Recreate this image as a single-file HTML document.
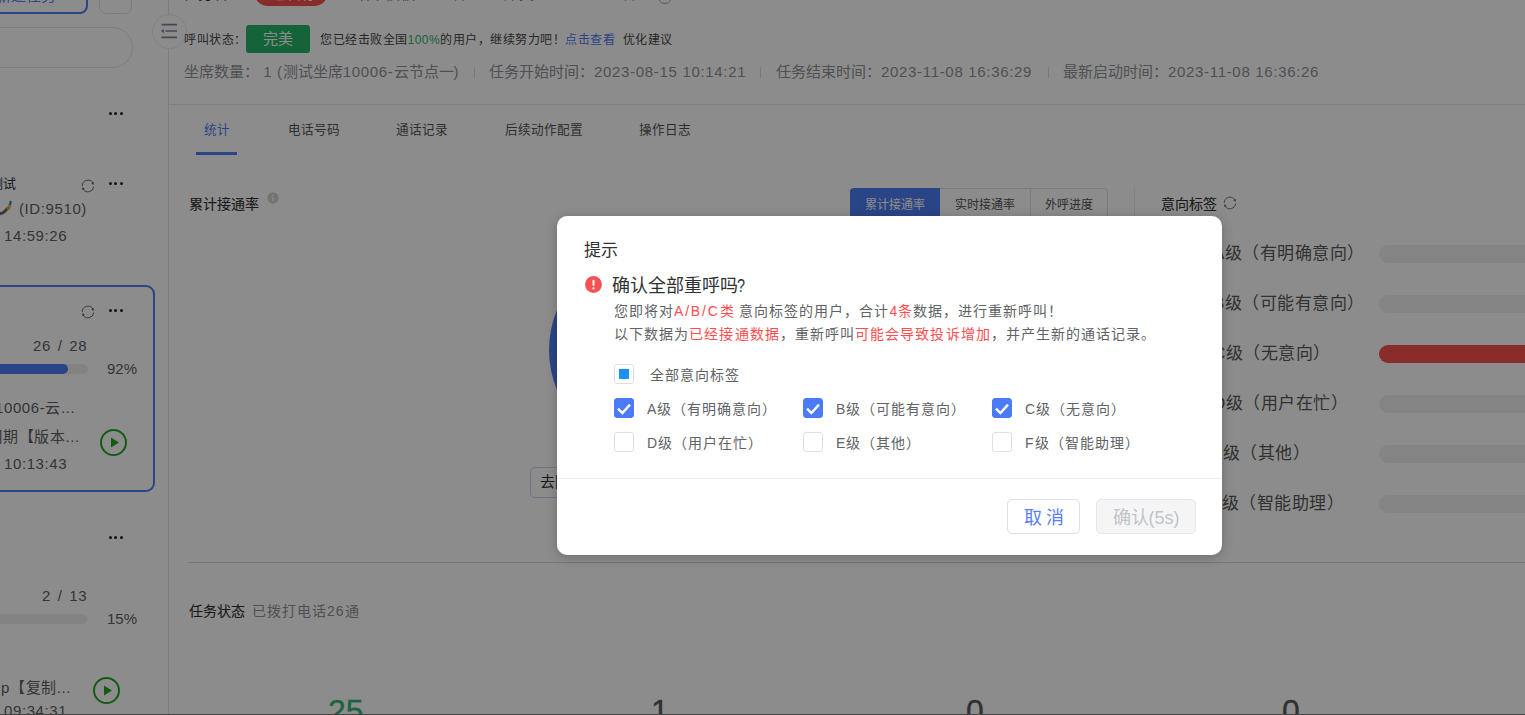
<!DOCTYPE html>
<html lang="zh-CN"><head><meta charset="utf-8">
<style>
*{margin:0;padding:0;box-sizing:border-box}
html,body{width:1525px;height:715px;overflow:hidden;background:#fff;font-family:"Liberation Sans",sans-serif;color:#303133}
.a{position:absolute;white-space:nowrap}
.t{position:absolute;white-space:nowrap;line-height:20px;height:20px}
.s{font-size:15px;color:#606266;letter-spacing:0.6px}
.dots{position:absolute;width:14px;height:3px}
.dots i{position:absolute;top:0;width:3px;height:3px;border-radius:50%;background:#222}
.dots i:nth-child(1){left:0}.dots i:nth-child(2){left:5.3px}.dots i:nth-child(3){left:10.6px}
.n{letter-spacing:0.68px}
.big{top:692.5px;font-size:32px;line-height:36px;font-weight:normal;-webkit-text-stroke:0.35px currentColor;color:#5a5a5a}
.med{-webkit-text-stroke:0.1px currentColor}
.mask{position:absolute;left:0;top:0;width:1525px;height:715px;background:rgba(0,0,0,0.45)}
.modal{position:absolute;left:557px;top:216px;width:665px;height:339px;background:#fff;border-radius:10px;box-shadow:0 2px 12px rgba(0,0,0,0.22)}
.cb{position:absolute;width:20px;height:20px;border:1.5px solid #dcdfe6;border-radius:3px;background:#fff}
.cb.on{background:#4c7bf7;border-color:#4c7bf7}
.cb.on svg{position:absolute;left:-1.5px;top:-1.5px}
.lbl{position:absolute;white-space:nowrap;font-size:14px;line-height:20px;color:#606266;letter-spacing:1px}
.red{color:#ff4d4f}
.bar{position:absolute;left:1379px;width:200px;height:18px;border-radius:9px;background:#f0f0f0}
.il{position:absolute;white-space:nowrap;font-size:17px;line-height:20px;color:#5a5a5a;letter-spacing:0.5px}
</style></head><body>
<div id="page">
  <!-- sidebar -->
  <div class="a" style="left:-22px;top:-24px;width:110px;height:38px;border:2px solid #4e7ef5;border-radius:8px"></div>
  <div class="t" style="left:-4px;top:-14px;font-size:15px;color:#4e7ef5">新建任务</div>
  <div class="a" style="left:99px;top:-22px;width:33px;height:36px;border:1px solid #dfe3ef;border-radius:7px"></div>
  <div class="a" style="left:-40px;top:27px;width:173px;height:41px;border:1px solid #dfe3ef;border-radius:21px"></div>
  <div class="dots" style="left:109px;top:112px"><i></i><i></i><i></i></div>

  <div class="t" style="left:-10px;top:174px;font-size:13px;color:#303133">测试</div>
  <svg class="a" style="left:81px;top:179px" width="14" height="14" viewBox="0 0 14 14"><path d="M12.78 7.5A5.8 5.8 0 0 1 1.98 9.9M1.2 7A5.8 5.8 0 0 1 12.12 4.28" fill="none" stroke="#6a6a6a" stroke-width="1"/><path d="M13 3l-0.3 2.8-2.6-1zM1 11l0.3-2.8 2.6 1z" fill="#6a6a6a"/></svg>
  <div class="dots" style="left:109px;top:182px"><i></i><i></i><i></i></div>
  <svg class="a" style="left:-2px;top:198px" width="18" height="20" viewBox="0 0 18 20"><path d="M0 16 Q6 16 9.5 10" fill="none" stroke="#6a6a6a" stroke-width="3"/><path d="M8.5 11l1.5-4 3 1.2-1.5 4z" fill="#e6b030"/><path d="M10.5 7l1.5-4.5 1.8 0.8-0.8 4.5z" fill="#3d88c0"/></svg>
  <div class="t s" style="left:19px;top:199px">(ID:9510)</div>
  <div class="t s" style="left:4px;top:226px">14:59:26</div>

  <div class="a" style="left:-24px;top:285px;width:179px;height:207px;border:2px solid #4e7ef5;border-radius:9px"></div>
  <svg class="a" style="left:81px;top:305px" width="14" height="14" viewBox="0 0 14 14"><path d="M12.78 7.5A5.8 5.8 0 0 1 1.98 9.9M1.2 7A5.8 5.8 0 0 1 12.12 4.28" fill="none" stroke="#6a6a6a" stroke-width="1"/><path d="M13 3l-0.3 2.8-2.6-1zM1 11l0.3-2.8 2.6 1z" fill="#6a6a6a"/></svg>
  <div class="dots" style="left:109px;top:308.5px"><i></i><i></i><i></i></div>
  <div class="t s" style="left:33px;top:336px;word-spacing:2px">26 / 28</div>
  <div class="a" style="left:-30px;top:364px;width:118px;height:10px;border-radius:5px;background:#eeeeee"></div>
  <div class="a" style="left:-30px;top:364px;width:98px;height:10px;border-radius:5px;background:#4e7ef5"></div>
  <div class="t s" style="left:107px;top:359px;letter-spacing:0">92%</div>
  <div class="t s" style="left:-5px;top:398px">10006-云...</div>
  <div class="t s" style="left:-12.5px;top:427px">周期【版本...</div>
  <div class="a" style="left:100px;top:428.5px;width:27.4px;height:27.4px;border:2.5px solid #22a822;border-radius:50%"></div>
  <svg class="a" style="left:100px;top:428.5px" width="27" height="27" viewBox="0 0 27 27"><path d="M11 8.5v10l8-5z" fill="#22a822"/></svg>
  <div class="t s" style="left:4px;top:454px">10:13:43</div>

  <div class="dots" style="left:109px;top:535.5px"><i></i><i></i><i></i></div>
  <div class="t s" style="left:42px;top:586px;word-spacing:2px">2 / 13</div>
  <div class="a" style="left:-30px;top:614px;width:117px;height:10px;border-radius:5px;background:#eeeeee"></div>
  <div class="t s" style="left:107px;top:609px;letter-spacing:0">15%</div>
  <div class="t s" style="left:1px;top:678px">p【复制...</div>
  <div class="a" style="left:93px;top:676.5px;width:27.4px;height:27.4px;border:2.5px solid #22a822;border-radius:50%"></div>
  <svg class="a" style="left:93px;top:676.5px" width="27" height="27" viewBox="0 0 27 27"><path d="M11 8.5v10l8-5z" fill="#22a822"/></svg>
  <div class="t s" style="left:4px;top:701px">09:34:31</div>

  <div class="a" style="left:168px;top:0;width:1px;height:715px;background:#e6e6e6"></div>
  <div class="a" style="left:151.5px;top:13.5px;width:35px;height:35px;border:1px solid #ebebeb;border-radius:50%;background:#fff"></div>
  <svg class="a" style="left:160px;top:22px" width="18" height="18" viewBox="0 0 18 18"><path d="M1.5 2.6h15.5M5.5 9h11.5M1.5 15.4h15.5" stroke="#7d8494" stroke-width="1.6"/><path d="M1 9l2.8-2.3v4.6z" fill="#7d8494"/></svg>

  <!-- main header -->
  <div class="t" style="left:183px;top:-16.5px;font-size:15px;color:#303133">任务名</div>
  <div class="a" style="left:253.5px;top:-22px;width:74px;height:28px;border-radius:14px;background:#f5504f"></div>
  <div class="t" style="left:272px;top:-16.5px;font-size:15px;color:#fff">已暂停</div>
  <div class="t" style="left:340px;top:-16.5px;font-size:15px;color:#606266">【话术模板：</div>
  <div class="t" style="left:436px;top:-16.5px;font-size:15px;color:#4e7ef5;letter-spacing:0px">查看</div>
  <div class="t" style="left:466px;top:-16.5px;font-size:15px;color:#606266">】【坐席类型：</div>
  <div class="t" style="left:606px;top:-16.5px;font-size:15px;color:#4e7ef5">查看</div>
  <div class="t" style="left:636px;top:-16.5px;font-size:15px;color:#606266">】</div>
  <div class="a" style="left:658px;top:-10px;width:14px;height:14px;border:1px solid #aaa;border-radius:50%"></div>

  <div class="t" style="left:184px;top:30px;font-size:12px;color:#474747;letter-spacing:0.5px">呼叫状态：</div>
  <div class="a" style="left:246px;top:25px;width:63.5px;height:28px;border-radius:3px;background:#27b569;color:#fff;font-size:15px;line-height:28px;text-align:center">完美</div>
  <div class="t" style="left:320px;top:30px;font-size:12px;color:#474747;letter-spacing:0.5px">您已经击败全国<span style="color:#2fb36b">100%</span>的用户，继续努力吧！<span style="color:#5377f2">点击查看</span>&nbsp; 优化建议</div>
  <div class="t" style="left:184px;top:62px;font-size:15px;color:#909399">坐席数量：&nbsp;<span class="n">1 (</span>测试坐席<span class="n">10006-</span>云节点一<span class="n">)</span></div>
  <div class="t" style="left:489px;top:62px;font-size:15px;color:#909399">任务开始时间：<span class="n">2023-08-15 10:14:21</span></div>
  <div class="t" style="left:776px;top:62px;font-size:15px;color:#909399">任务结束时间：<span class="n">2023-11-08 16:36:29</span></div>
  <div class="t" style="left:1063px;top:62px;font-size:15px;color:#909399">最新启动时间：<span class="n">2023-11-08 16:36:26</span></div>
  <div class="a" style="left:474px;top:67px;width:1px;height:11px;background:#dcdfe6"></div>
  <div class="a" style="left:760px;top:67px;width:1px;height:11px;background:#dcdfe6"></div>
  <div class="a" style="left:1048px;top:67px;width:1px;height:11px;background:#dcdfe6"></div>
  <div class="a" style="left:169px;top:104px;width:1356px;height:1px;background:#e4e7ed"></div>

  <!-- tabs -->
  <div class="t" style="left:204px;top:120px;font-size:12.6px;color:#4e7ef5">统计</div>
  <div class="t" style="left:288px;top:120px;font-size:12.6px;color:#555">电话号码</div>
  <div class="t" style="left:396px;top:120px;font-size:12.6px;color:#555">通话记录</div>
  <div class="t" style="left:505px;top:120px;font-size:12.6px;color:#555">后续动作配置</div>
  <div class="t" style="left:639px;top:120px;font-size:12.6px;color:#555">操作日志</div>
  <div class="a" style="left:196px;top:152px;width:41px;height:3px;background:#4e7ef5"></div>

  <div class="t med" style="left:189px;top:193.5px;font-size:14px;color:#303133">累计接通率</div>
  <svg class="a" style="left:266.5px;top:191.5px" width="12" height="12" viewBox="0 0 12 12"><circle cx="6" cy="6" r="5.7" fill="#d3d4d6"/><rect x="5.3" y="5" width="1.4" height="4" fill="#fff"/><circle cx="6" cy="3.3" r="0.8" fill="#fff"/></svg>

  <div class="a" style="left:850px;top:188px;width:258px;height:32px;border:1px solid #dcdfe6;border-radius:4px"></div>
  <div class="a" style="left:850px;top:188px;width:90px;height:32px;background:#4e7ef5;border-radius:4px 0 0 4px;color:#fff;font-size:12px;line-height:34px;text-align:center">累计接通率</div>
  <div class="a" style="left:1030px;top:188px;width:1px;height:32px;background:#dcdfe6"></div>
  <div class="a" style="left:940px;top:188px;width:90px;height:32px;color:#555;font-size:12px;line-height:34px;text-align:center">实时接通率</div>
  <div class="a" style="left:1030px;top:188px;width:78px;height:32px;color:#555;font-size:12px;line-height:34px;text-align:center">外呼进度</div>
  <div class="a" style="left:1134px;top:188px;width:1px;height:40px;background:#e4e7ed"></div>
  <div class="t med" style="left:1161px;top:193.5px;font-size:14px;color:#303133">意向标签</div>
  <svg class="a" style="left:1223px;top:196px" width="14" height="14" viewBox="0 0 14 14"><path d="M12.78 7.5A5.8 5.8 0 0 1 1.98 9.9M1.2 7A5.8 5.8 0 0 1 12.12 4.28" fill="none" stroke="#777" stroke-width="1"/><path d="M13 3l-0.3 2.8-2.6-1zM1 11l0.3-2.8 2.6 1z" fill="#777"/></svg>

  <div class="il" style="left:1213px;top:244px">A级（有明确意向）</div>
  <div class="il" style="left:1213px;top:294px">B级（可能有意向）</div>
  <div class="il" style="left:1213px;top:344px">C级（无意向）</div>
  <div class="il" style="left:1213px;top:394px">D级（用户在忙）</div>
  <div class="il" style="left:1211px;top:444px">E级（其他）</div>
  <div class="il" style="left:1211px;top:494px">F级（智能助理）</div>
  <div class="bar" style="top:244.5px"></div>
  <div class="bar" style="top:294.5px"></div>
  <div class="bar" style="top:344.5px;background:#fd5050"></div>
  <div class="bar" style="top:394.5px"></div>
  <div class="bar" style="top:444.5px"></div>
  <div class="bar" style="top:494.5px"></div>

  <div class="a" style="left:548.5px;top:246px;width:208px;height:208px;border-radius:50%;background:#4e7ef5"></div>
  <div class="a" style="left:529.5px;top:467px;width:60px;height:30.5px;border:1.5px solid #cdd5f0;border-radius:5px;font-size:15px;line-height:27px;padding-left:9.5px;color:#303133">去除</div>

  <div class="a" style="left:188px;top:562px;width:1337px;height:1px;background:#d9d9d9"></div>
  <div class="t med" style="left:189px;top:601px;font-size:14px;color:#303133">任务状态</div>
  <div class="t" style="left:252px;top:601px;font-size:14px;color:#909399;letter-spacing:1px">已拨打电话26通</div>
  <div class="a big" style="left:328px;color:#36b573">25</div>
  <div class="a big" style="left:651px">1</div>
  <div class="a big" style="left:966px">0</div>
  <div class="a big" style="left:1282px">0</div>
</div>
<div class="mask"></div>
<div class="a" style="left:0;top:714px;width:1525px;height:1px;background:#454545"></div>

<div class="modal">
  <div class="t" style="left:26.5px;top:23.5px;font-size:17px;line-height:22px;height:22px;color:#303133">提示</div>
  <svg class="a" style="left:27.5px;top:59.5px" width="17" height="17" viewBox="0 0 17 17"><circle cx="8.5" cy="8.5" r="8.4" fill="#f55353"/><rect x="7.5" y="3.8" width="2" height="6.2" rx="1" fill="#fff"/><circle cx="8.5" cy="12.4" r="1.1" fill="#fff"/></svg>
  <div class="t" style="left:55px;top:58.5px;font-size:18px;line-height:22px;height:22px;color:#303133">确认全部重呼吗<span style="display:inline-block;margin-left:-1.5px;transform:scaleX(0.8);transform-origin:left">?</span></div>
  <div class="lbl" style="left:57px;top:85px">您即将对<span class="red"><span style="letter-spacing:1.8px">A/B/C</span>类</span> 意向标签的用户，合计<span class="red">4条</span>数据，进行重新呼叫！</div>
  <div class="lbl" style="left:57px;top:108px;letter-spacing:1.07px">以下数据为<span class="red">已经接通数据</span>，重新呼叫<span class="red">可能会导致投诉增加</span>，并产生新的通话记录。</div>

  <div class="cb" style="left:57px;top:148px"><div style="position:absolute;left:3.5px;top:3.5px;width:10.5px;height:10.5px;background:#1890ff"></div></div>
  <div class="lbl" style="left:93px;top:149px">全部意向标签</div>

  <div class="cb on" style="left:57px;top:182px"><svg width="20" height="20" viewBox="0 0 20 20"><path d="M4 10.6l4.4 4.4 7.6-8.4" fill="none" stroke="#fff" stroke-width="2.4"/></svg></div>
  <div class="lbl" style="left:90px;top:183px">A级（有明确意向）</div>
  <div class="cb on" style="left:246px;top:182px"><svg width="20" height="20" viewBox="0 0 20 20"><path d="M4 10.6l4.4 4.4 7.6-8.4" fill="none" stroke="#fff" stroke-width="2.4"/></svg></div>
  <div class="lbl" style="left:279px;top:183px">B级（可能有意向）</div>
  <div class="cb on" style="left:435px;top:182px"><svg width="20" height="20" viewBox="0 0 20 20"><path d="M4 10.6l4.4 4.4 7.6-8.4" fill="none" stroke="#fff" stroke-width="2.4"/></svg></div>
  <div class="lbl" style="left:468px;top:183px">C级（无意向）</div>

  <div class="cb" style="left:57px;top:216px"></div>
  <div class="lbl" style="left:90px;top:217px">D级（用户在忙）</div>
  <div class="cb" style="left:246px;top:216px"></div>
  <div class="lbl" style="left:279px;top:217px">E级（其他）</div>
  <div class="cb" style="left:435px;top:216px"></div>
  <div class="lbl" style="left:468px;top:217px">F级（智能助理）</div>

  <div class="a" style="left:0;top:261.5px;width:665px;height:1.5px;background:#ebeef5"></div>
  <div class="a" style="left:450px;top:283px;width:73px;height:35px;border:1px solid #dcdfe6;border-radius:5px;color:#5a80f5;font-size:18px;line-height:36px;text-align:center;letter-spacing:4px;padding-left:4px">取消</div>
  <div class="a" style="left:539px;top:283px;width:100px;height:35px;border:1px solid #e4e7ed;border-radius:5px;background:#f5f5f5;color:#c0c4cc;font-size:18px;line-height:36px;text-align:center">确认(5s)</div>
</div>
</body></html>
